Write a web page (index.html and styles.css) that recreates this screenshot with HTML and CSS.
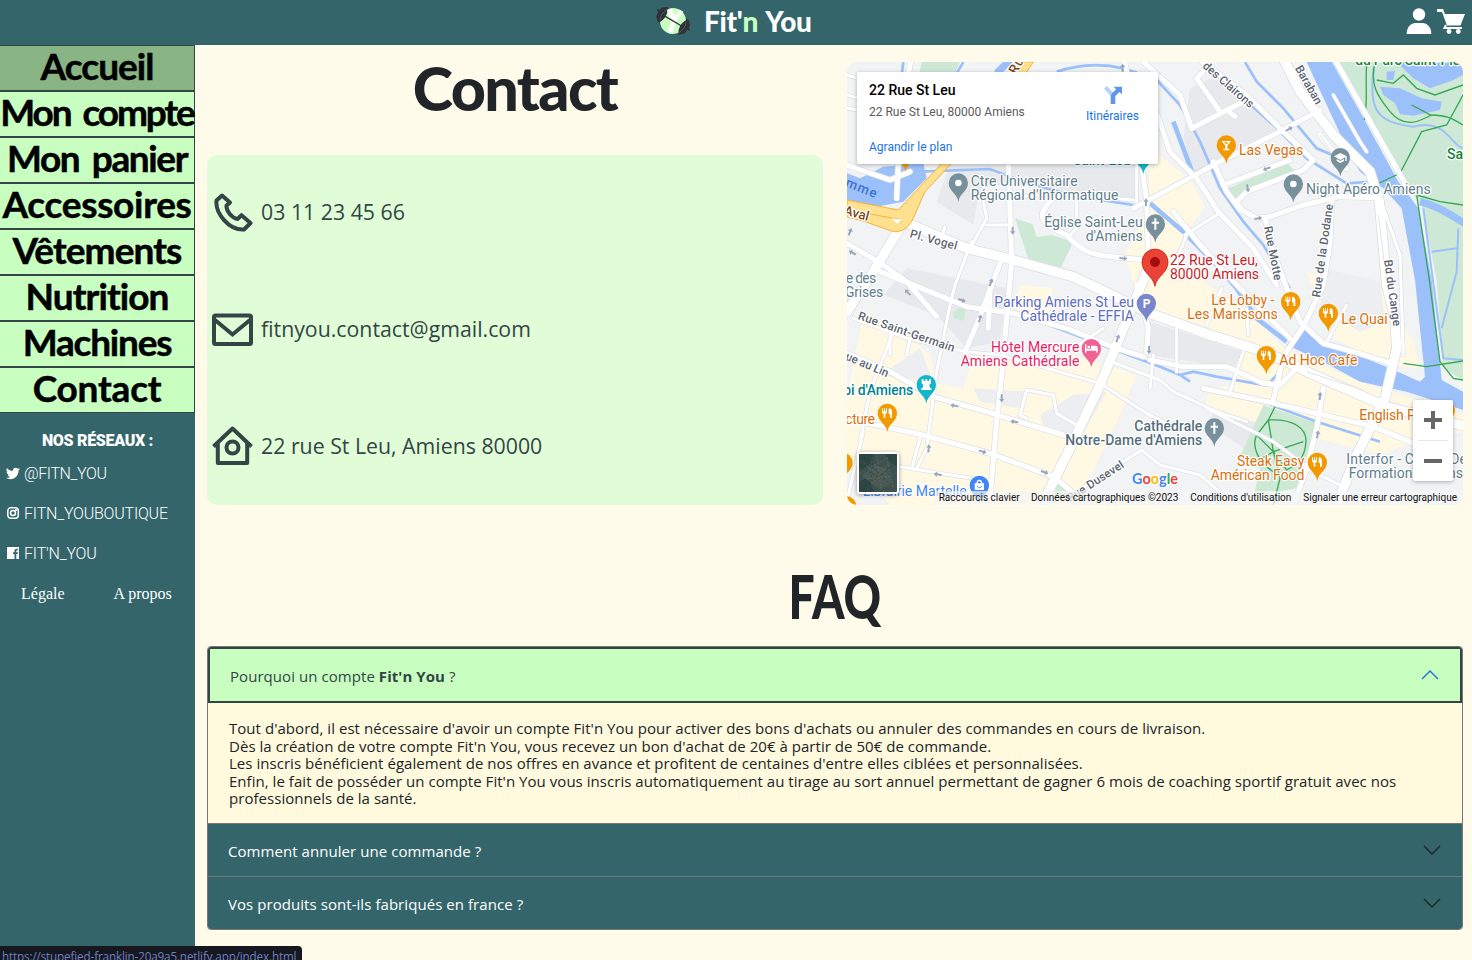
FILE: index.html
```html
<!DOCTYPE html>
<html lang="fr">
<head>
<meta charset="utf-8">
<title>Fit'n You - Contact</title>
<link rel="stylesheet" href="styles.css">
</head>
<body>
<header class="topbar">
  <div class="brand">
    <svg class="brand-logo" viewBox="0 0 102 84" width="34" height="28">
      <g transform="translate(51 42) rotate(31)">
        <path d="M-58-3v-5h7v-8l6-5 6-6h14v52h-14l-6-6-6-5v-13zM58-1v-5h-7v-8l-6-7-6-6H24v52h14l6-6 6-5v-13z" fill="#30343a"/>
        <circle r="39" fill="#c8ffc1"/>
        <path d="M-32-23A40 40 0 0 0-32 23Q-20 0-32-23ZM32-23A40 40 0 0 1 32 23Q20 0 32-23Z" fill="#30343a"/>
      </g>
      <path d="M33 10l14-6 11 24 13-20 11 6-23 32-9 32-14-3 9-30z" fill="#fff"/>
      <path d="M24 26l58 34" stroke="#30343a" stroke-width="4"/>
    </svg>
    <span class="brand-name">Fit'<span class="brand-accent">n</span> You</span>
  </div>
  <div class="tools">
    <svg viewBox="0 0 26 26" width="26" height="26" fill="#fff"><circle cx="13" cy="6.500" r="6.200"/><path d="M.7 26c0-7 4-11 9-11h6.600c5 0 9 4 9 11z"/></svg>
    <svg viewBox="0 0 28 26" width="28" height="26" fill="#fff"><path d="M0 1h6l2 5h20l-4.500 11.500H10L5 4H0z"/><path d="M9 17l-1.500 3H25" fill="none" stroke="#fff" stroke-width="2"/><circle cx="12" cy="23.500" r="2.400"/><circle cx="21.300" cy="23.500" r="2.400"/></svg>
  </div>
</header>

<div class="page">
  <aside class="sidebar">
    <nav class="menu">
      <a class="menu-item active t1">Accueil</a>
      <a class="menu-item t2">Mon compte</a>
      <a class="menu-item t3">Mon panier</a>
      <a class="menu-item t4">Accessoires</a>
      <a class="menu-item t5">Vêtements</a>
      <a class="menu-item t6">Nutrition</a>
      <a class="menu-item t7">Machines</a>
      <a class="menu-item t8">Contact</a>
    </nav>
    <h4 class="social-title">NOS RÉSEAUX :</h4>
    <ul class="social">
      <li><svg viewBox="0 0 16 16" width="14" height="14" fill="#fff"><path d="M5 15c6 0 9.300-5 9.300-9.300V5.200A6.700 6.700 0 0 0 16 3.500a6.600 6.600 0 0 1-1.900.5 3.300 3.300 0 0 0 1.400-1.800 6.500 6.500 0 0 1-2.100.8 3.300 3.300 0 0 0-5.600 3A9.300 9.300 0 0 1 1.100 2.600a3.300 3.300 0 0 0 1 4.400 3.200 3.200 0 0 1-1.500-.4 3.300 3.300 0 0 0 2.600 3.200 3.200 3.200 0 0 1-1.500.1 3.300 3.300 0 0 0 3.100 2.300A6.600 6.600 0 0 1 0 13.500 9.300 9.300 0 0 0 5 15z"/></svg>@FITN_YOU</li>
      <li class="wide"><svg viewBox="0 0 14 14" width="14" height="14" fill="none" stroke="#fff" stroke-width="1.500"><rect x="1.800" y="1.800" width="10.500" height="10.500" rx="3"/><circle cx="7" cy="7" r="2.500"/><circle cx="10" cy="4" r=".4"/></svg>FITN_YOUBOUTIQUE</li>
      <li class="wide"><svg viewBox="0 0 14 14" width="14" height="14"><rect x="1" y="1" width="12" height="12" fill="#fff"/><path d="M8.500 13V8H7V6.300h1.500V5c0-1.500.8-2.300 2.200-2.300h1.200v1.600h-.8c-.6 0-.8.3-.8.900v1.100h1.600L11.700 8h-1.400v5z" fill="#34656b"/></svg>FIT'N_YOU</li>
    </ul>
    <div class="legal"><a>Légale</a><a>A propos</a></div>
  </aside>

  <main class="content">
    <section class="contact-row">
      <div class="contact-col">
        <h1 class="contact-title">Contact</h1>
        <div class="contact-card">
          <p><svg viewBox="0 0 42 42" width="42" height="42" fill="none" stroke="#344545" stroke-width="4"><path d="M11 4.500L5.500 9.500C4 22 18 39.500 33 38.500L39.500 32 30.500 24.200 26.500 28C21 27 15 20 15.500 14.500L19 11.500Z" stroke-linejoin="round"/></svg>03 11 23 45 66</p>
          <p><svg viewBox="0 0 42 42" width="42" height="42" fill="none" stroke="#344545" stroke-width="4"><rect x="3" y="7.500" width="37" height="28.500" rx="1.500"/><path d="M4 12l17.500 14.500L39 12"/></svg>fitnyou.contact@gmail.com</p>
          <p><svg viewBox="0 0 42 42" width="42" height="42" fill="none" stroke="#344545" stroke-width="4"><path d="M2.500 22.500L21.500 4.500l19 18M6.800 18.500V39h29.400V18.500" stroke-linejoin="round"/><circle cx="21.500" cy="23.500" r="6"/></svg>22 rue St Leu, Amiens 80000</p>
        </div>
      </div>

      <div class="map">
        <svg class="map-canvas" viewBox="21 21 1848 1329" width="616" height="443">
          <defs>
            <path id="pin" d="M0 56C-4 30-29 25-29 0A29 29 0 1 1 29 0C29 25 4 30 0 56Z"/>
            <g id="fork" fill="#fff"><path d="M-16-15h3v9h3v-9h3v9h3v-9h3v13l-5 4v11h-5V2l-5-4zM6-15c5 0 8 4 8 10v18H8V2H4v-14z"/></g>
            <path id="cross" d="M-3-17h6v10h8v6H3v18h-6V-1h-8v-6h8z" fill="#fff"/>
            <path id="arrow" d="M0-12L8-2H3V12h-6V-2h-5z" fill="#9aa6bd"/>
            <g id="roads-wide">
              <path d="M180 495L380 580 520 615 700 665 930 775 1110 840 1240 880 1330 915 1400 950 1560 1020 1640 1055 1869 1112"/>
              <path d="M185 510L100 650 21 770"/>
              <path d="M1325 0L1380 110 1480 240 1590 350 1618 440 1640 690 1665 790 1670 880 1635 1030 1550 1200 1490 1350"/>
              <path d="M925 640L780 990 690 1180 605 1350"/>
            </g>
            <g id="roads-mid">
              <path d="M21 895L150 950 280 1025 440 1070 620 1125 720 1155"/>
              <path d="M1477 0L1695 385"/>
              <path d="M1060 0L1220 120 1330 230 1420 315 1390 345 1220 410 1190 440 1205 465 1250 490 1290 485 1390 450 1500 425 1620 428"/>
              <path d="M880 460L1130 325 1330 225 1440 165"/>
              <path d="M910 21L1020 120 1055 220 1210 140M1140 170L1070 70 1100 40M1160 165L1185 185"/>
              <path d="M945 160L990 290 1070 370 1135 470 1240 580 1310 690"/>
              <path d="M1120 320L1160 410 1200 465M1150 390L1350 315"/>
              <path d="M1275 490L1300 590 1340 700 1380 800 1450 865 1540 890 1655 925"/>
              <path d="M1475 435L1470 560 1450 690 1390 815 1330 905 1300 1035"/>
              <path d="M505 330L515 620 500 790 485 960 470 1100 450 1330"/>
              <path d="M480 625L420 785 375 890"/>
              <path d="M120 650L380 755 520 775 680 820 830 880 910 905"/>
              <path d="M60 1100L250 1140 450 1195 640 1265 720 1330"/>
              <path d="M640 430C590 480 590 500 680 540C740 610 780 600 910 615"/>
              <path d="M215 0L180 210 170 430M21 330L150 375 210 350"/>
              <path d="M21 565L130 630 200 680 290 785"/>
              <path d="M930 915L1030 935 1160 935 1270 985 1320 990 1360 950M1090 1000L1280 1040 1450 1080 1600 1115 1720 1165"/>
              <path d="M1450 1000L1430 1120 1400 1240 1360 1350"/>
              <path d="M1440 240L1520 340M450 700L445 820"/>
              <path d="M850 0L860 50M905 330L920 440 925 600"/>
              <path d="M1000 470L1080 570 1200 700 1350 850"/>
              <path d="M890 690L925 820 920 890"/>
            </g>
            <g id="roads-small">
              <path d="M395 560L345 690 330 750 290 950 260 1180 230 1240"/>
              <path d="M430 440L440 490 385 590M440 510H510M505 430L640 415 880 435M890 300V440"/>
              <path d="M40 790L200 850 380 890 480 900 640 945 780 985 920 1075 1010 1120"/>
              <path d="M800 915L960 975 1000 1010 1130 1070 1220 1100M1100 1060L1300 1160 1420 1250"/>
              <path d="M180 1235L300 1255 430 1275M70 1130L20 1340M160 830L90 1010 60 1160"/>
              <path d="M560 1090L540 1080 560 1005 640 1020 650 1075 710 1110"/>
              <path d="M680 1330L905 1185 960 1230 1080 1260 1150 1320"/>
              <path d="M1145 700L1100 810M1010 800V950M1220 760L1225 840M1210 890L1170 1010"/>
              <path d="M1035 540L1130 480M1040 540L1000 640M1520 750L1460 860M1620 430L1680 600 1690 900"/>
              <path d="M710 440V520L690 540M315 515L305 550M150 830V900M210 850L200 900M215 1240L240 1150"/>
              <path d="M21 60L150 100M21 120L60 130M21 160L60 165M1480 120L1560 260 1580 290"/>
              <path d="M790 820L700 880M940 900L930 1000M1400 1240L1520 1300"/>
            </g>
          </defs>
          <rect x="21" y="21" width="1848" height="1329" fill="#f1f3f4"/>
          <path fill="#e7e9ed" d="M330 330H890V430L640 420 540 380 420 400 400 510 290 440ZM1050 100L1130 60 1310 230 1060 350 1030 250ZM200 640L500 700 480 860 380 880 290 780 130 720ZM930 800L1210 890 1180 940 930 900ZM1150 1040L1270 1080 1210 1180 1100 1100ZM480 1060H640V1100L500 1100Z"/>
          <path fill="#fff8e3" d="M75 770L200 840 270 900 290 985 370 1000 400 900 560 920 700 900 890 960 840 1080 710 1350H150L21 1200V1020L60 830ZM855 600L930 440 925 330 960 300 1060 385 1095 455 1040 530 990 630 1120 700 1250 790 1330 880 1560 980 1869 1080V1130L1700 1170 1620 1200 1090 1060 1110 1000 1180 990 1210 890 910 780ZM1400 650L1620 700 1720 860 1740 940 1640 930 1480 850ZM950 640L1100 670 1080 810 930 750ZM540 690L640 700 620 800 520 760Z"/>
          <path fill="#eceef1" d="M400 1000L560 1010 540 1060 420 1040ZM600 1080L700 1020 800 1010 720 1150 610 1110ZM120 960L240 880 280 980ZM1450 640L1620 680 1635 800 1560 830 1440 760Z"/>
          <path fill="#cde9d6" d="M1475 21H1869V975L1810 940 1790 675 1745 450 1680 370ZM525 490L578 508 590 545 635 540 700 560 650 665 600 655 565 612ZM1165 400L1340 325 1370 350 1185 430ZM1270 1050L1430 1105 1410 1240 1370 1300 1240 1325 1260 1240 1200 1205ZM245 21H360L345 55H238ZM340 770L378 750 372 798 342 790ZM655 1275L720 1330H640ZM21 730L40 740 21 780Z"/>
          <g fill="#9cc0f9">
            <path d="M1385 820L1450 865 1550 900 1650 940 1740 980 1755 965 1725 675 1685 460 1630 400 1560 350 1530 300 1400 21H1475L1560 170 1675 380 1735 460 1775 675 1805 975 1869 1010V1065L1700 1010 1560 980 1450 920 1340 870Z"/>
            <path d="M21 355L60 370 130 335 250 325 260 370 190 440 100 457 21 435Z"/>
            <path d="M1620 95L1680 100 1745 130 1805 140 1800 165 1720 182 1680 178 1665 145 1630 120ZM1670 21H1869V60L1840 75 1770 100 1720 70ZM1640 50L1665 48 1660 75 1640 75Z"/>
          </g>
          <g fill="none" stroke="#9cc0f9" stroke-width="8">
            <path d="M240 350L450 342 550 380 700 422 880 450M650 50C740 20 830 20 930 70M190 21L180 100M370 21L350 55"/>
            <path d="M470 55L510 15" stroke-width="22"/>
            <path d="M1215 21L1250 80 1330 160 1380 220 1430 280 1500 310M1060 0L1200 120 1310 220 1400 310 1520 385 1600 380M950 75L1020 150 1080 260 1140 400 1210 500 1270 570 1350 700M1060 355L1310 230"/>
            <path d="M1000 200L1060 360M930 445L1030 530 1130 630 1190 700 1250 790 1340 860" stroke-width="14"/>
            <path d="M240 695L400 765M600 800L960 935 1020 960 1050 980M1020 960L1060 950 1130 965 1280 992 1320 950 1340 910M1090 1003L1280 1045 1430 1100 1620 1160"/>
            <path d="M1600 40C1590 160 1600 200 1720 215 1820 190 1830 270 1869 280M1740 440C1800 460 1820 470 1869 510M1750 460L1810 910 1869 915M1775 590L1850 580M1855 520L1850 650 1805 820" stroke-width="6"/>
            <path d="M1740 440C1800 455 1830 480 1875 505" stroke-width="22"/>
          </g>
          <g fill="none" stroke="#34a853" stroke-width="4">
            <path d="M1580 21C1575 100 1585 150 1572 195M1605 21C1590 90 1610 120 1650 170 1700 230 1750 190 1775 180 1830 180 1850 200 1869 210M1610 75L1660 85 1690 60 1730 100 1785 120 1869 90M1715 150L1775 182M1869 120L1820 210 1745 230 1680 355 1605 390M1730 420L1800 440 1869 450M1730 420L1768 675 1800 920 1840 970 1869 975M1690 925L1760 935 1869 918"/>
            <path d="M1310 1045L1285 1095 1300 1190 1390 1160M1285 1095C1360 1090 1400 1120 1398 1160 1395 1210 1370 1230 1340 1245L1300 1190 1250 1140 1285 1095M1250 1140C1235 1170 1250 1220 1300 1250M1300 1350L1320 1270 1300 1190M1250 1220L1300 1190"/>
          </g>
          <g fill="none" stroke="#dcdfe5" stroke-linejoin="round" stroke-linecap="round">
            <use href="#roads-small" stroke-width="13"/><use href="#roads-mid" stroke-width="19"/><use href="#roads-wide" stroke-width="33"/>
          </g>
          <g fill="none" stroke="#fff" stroke-linejoin="round" stroke-linecap="round">
            <use href="#roads-small" stroke-width="9"/><use href="#roads-mid" stroke-width="15"/><use href="#roads-wide" stroke-width="28"/>
          </g>
          <path d="M1440 240L1500 330M1615 480L1640 680 1665 800M1400 950L1570 1005" fill="none" stroke="#dfe2e6" stroke-width="3"/>
          <path d="M21 435L175 465 310 320 500 90 540 21H580L520 110 335 325 255 410 215 500Q190 535 160 530L75 500 21 485Z" fill="#fee08f" stroke="#f6b23b" stroke-width="3"/>
          <path d="M85 476L155 489 188 495 180 505" stroke="#f6b23b" stroke-width="3" fill="none"/>
          <path d="M155 490L190 494 172 506Z" fill="#fff"/>
          <g>
            <use href="#arrow" x="848" y="38"/><use href="#arrow" x="918" y="442"/><use href="#arrow" transform="translate(518 527) rotate(180)"/>
            <use href="#arrow" transform="translate(850 610) rotate(95)"/><use href="#arrow" transform="translate(453 682) rotate(20)"/><use href="#arrow" transform="translate(420 790) rotate(15)"/>
            <use href="#arrow" transform="translate(1347 222) rotate(60)"/><use href="#arrow" transform="translate(1280 341) rotate(-110)"/><use href="#arrow" transform="translate(1223 400) rotate(170)"/>
            <use href="#arrow" transform="translate(1255 490) rotate(80)"/><use href="#arrow" transform="translate(833 850) rotate(20)"/><use href="#arrow" transform="translate(485 1030) rotate(180)"/>
            <use href="#arrow" transform="translate(343 1052) rotate(-80)"/><use href="#arrow" transform="translate(523 1100) rotate(-80)"/><use href="#arrow" transform="translate(428 1190) rotate(105)"/>
            <use href="#arrow" transform="translate(266 1180) rotate(5)"/><use href="#arrow" transform="translate(293 1258) rotate(-82)"/><use href="#arrow" transform="translate(614 1252) rotate(110)"/>
            <use href="#arrow" transform="translate(927 885) rotate(180)"/><use href="#arrow" transform="translate(1440 1023) rotate(5)"/><use href="#arrow" transform="translate(1433 1138) rotate(10)"/>
            <use href="#arrow" transform="translate(203 712) rotate(-45)"/><use href="#arrow" transform="translate(366 736) rotate(110)"/><use href="#arrow" transform="translate(30 530) rotate(20)"/><use href="#arrow" transform="translate(37 593) rotate(-60)"/>
          </g>

          <g class="street">
            <text transform="translate(208 547) rotate(15)" textLength="145">Pl. Vogel</text>
            <text class="major" transform="translate(10 478) rotate(15)" textLength="76" fill="#7b4a1c">Aval</text>
            <text class="water" transform="translate(14 393) rotate(22)" textLength="98" fill="#3f73cf">mme</text>
            <text class="major" transform="translate(528 60) rotate(-60)" textLength="50" fill="#7b4a1c">Ru</text>
            <text transform="translate(52 792) rotate(19)" textLength="304">Rue Saint-Germain</text>
            <text transform="translate(14 913) rotate(23)" textLength="137">ue au Lin</text>
            <text transform="translate(690 1342) rotate(-33)" textLength="196">Rue Dusevel</text>
            <text transform="translate(1086 36) rotate(41)" textLength="190">des Clairons</text>
            <text transform="translate(1364 40) rotate(60)" textLength="128">Baraban</text>
            <text transform="translate(1272 516) rotate(79)" textLength="165">Rue Motte</text>
            <text transform="translate(1440 728) rotate(-82)" textLength="282">Rue de la Dodane</text>
            <text transform="translate(1632 616) rotate(82)" textLength="200">Bd du Cange</text>
          </g>

          <g>
            <g transform="translate(355 384)"><use href="#pin" fill="#78909c"/><circle r="10" fill="#fff"/></g>
            <g transform="translate(1159 270)"><use href="#pin" fill="#f29900"/><path d="M-14-12H14L3 2V11H9V16H-9V11H-3V2Z" fill="#fff"/><path d="M-7-8H7L3-4H-3Z" fill="#f29900"/></g>
            <g transform="translate(1501 308)"><use href="#pin" fill="#78909c"/><path d="M-19-4L0-14 19-4V10H15V-1L0 7ZM-11 4L0 10 11 4V10L0 16-11 10Z" fill="#fff"/></g>
            <g transform="translate(1360 387)"><use href="#pin" fill="#78909c"/><circle r="10" fill="#fff"/></g>
            <g transform="translate(946 507)"><use href="#pin" fill="#78909c"/><use href="#cross"/></g>
            <g transform="translate(1123 1119)"><use href="#pin" fill="#78909c"/><use href="#cross"/></g>
            <g transform="translate(919 745)"><use href="#pin" fill="#7986cb"/><text class="pin-letter" x="-11" y="13">P</text></g>
            <g transform="translate(754 881)"><use href="#pin" fill="#f06292"/><path d="M-19-13h4V0H-1V-9H13Q19-9 19-2V12H15V6H-15V12H-19Z" fill="#fff"/><circle cx="-8" cy="-5" r="4" fill="#fff"/></g>
            <g transform="translate(259 989)"><use href="#pin" fill="#12b5cb"/><path d="M-14-16h6v5h5v-5h6v5h5v-5h6v12l-5 4 2 10h4v6H-15V10h4l2-10-5-4z" fill="#fff"/></g>
            <g transform="translate(418 1291)"><use href="#pin" fill="#4285f4"/><path d="M-14-6H14V14H-14Z" fill="#fff"/><path d="M-7-5C-7-18 7-18 7-5" fill="none" stroke="#fff" stroke-width="4"/><path d="M-6 2C-5 9 5 9 6 2" fill="none" stroke="#4285f4" stroke-width="3"/></g>
            <g transform="translate(1352 740)"><use href="#pin" fill="#f29900"/><use href="#fork"/></g>
            <g transform="translate(1465 775)"><use href="#pin" fill="#f29900"/><use href="#fork"/></g>
            <g transform="translate(1279 902)"><use href="#pin" fill="#f29900"/><use href="#fork"/></g>
            <g transform="translate(1432 1222)"><use href="#pin" fill="#f29900"/><use href="#fork"/></g>
            <g transform="translate(142 1075)"><use href="#pin" fill="#f29900"/><use href="#fork"/></g>
            <use href="#pin" x="9" y="1223" fill="#f29900"/><use href="#pin" x="20" y="1353" fill="#f29900"/>
            <use href="#pin" x="1816" y="1065" fill="#f29900"/><use href="#pin" x="197" y="295" fill="#f29900"/><use href="#pin" x="910" y="301" fill="#12b5cb"/>
            <path d="M945 694C938 660 906 655 906 621A39 39 0 1 1 984 621C984 655 952 660 945 694Z" fill="#ea4335" stroke="#b3140f" stroke-width="2"/><circle cx="945" cy="621" r="15" fill="#a50e0e"/>
          </g>

          <g class="place">
            <g fill="#607d8b">
              <text x="392" y="393" textLength="321">Ctre Universitaire</text><text x="392" y="435" textLength="443">Régional d'Informatique</text>
              <text x="613" y="516" textLength="295">Église Saint-Leu</text><text x="737" y="558" textLength="171">d'Amiens</text>
              <text x="17" y="684" textLength="92">e des</text><text x="15" y="727" textLength="115">Grises</text>
              <text x="1398" y="418" textLength="374">Night Apéro Amiens</text>
              <text x="1519" y="1227" textLength="362">Interfor - Centre De</text><text x="1526" y="1269" textLength="343">Formation Amiens</text>
            </g>
            <g fill="#546e7a" class="strong"><text x="883" y="1129" textLength="204">Cathédrale</text><text x="676" y="1170" textLength="411">Notre-Dame d'Amiens</text></g>
            <g fill="#d8700b">
              <text x="1197" y="300" textLength="193">Las Vegas</text>
              <text x="1114" y="751" textLength="189">Le Lobby -</text><text x="1042" y="792" textLength="271">Les Marissons</text>
              <text x="1504" y="807" textLength="139">Le Quai</text><text x="1318" y="930" textLength="234">Ad Hoc Cafe</text>
              <text x="1558" y="1095" textLength="215">English Pub</text>
              <text x="1191" y="1234" textLength="202">Steak Easy</text><text x="1112" y="1276" textLength="281">Américan Food</text>
              <text x="16" y="1107" textLength="89">cture</text>
            </g>
            <g fill="#5c6bc0"><text x="463" y="756" textLength="419">Parking Amiens St Leu</text><text x="541" y="798" textLength="341">Cathédrale - EFFIA</text></g>
            <g fill="#e91e63"><text x="453" y="891" textLength="265">Hôtel Mercure</text><text x="362" y="933" textLength="356">Amiens Cathédrale</text></g>
            <g fill="#c5221f"><text x="990" y="631" textLength="263">22 Rue St Leu,</text><text x="990" y="672" textLength="267">80000 Amiens</text></g>
            <g fill="#00838f" class="strong"><text x="10" y="1020" textLength="210">oi d'Amiens</text><text x="700" y="330" textLength="172">Saint-Leu</text></g>
            <text x="68" y="1323" textLength="312" fill="#4285f4">Librairie Martelle</text>
            <g fill="#188038" class="strong"><text x="1821" y="312">Sain</text><text x="1546" y="31" textLength="314">du Parc Saint-Pie</text></g>
          </g>

          <rect x="285" y="1308" width="1584" height="42" fill="#f5f5f5" opacity=".7"/>
          <text class="google" x="876" y="1287" textLength="138" lengthAdjust="spacingAndGlyphs"><tspan fill="#4285f4">G</tspan><tspan fill="#ea4335">o</tspan><tspan fill="#fbbc04">o</tspan><tspan fill="#4285f4">g</tspan><tspan fill="#34a853">l</tspan><tspan fill="#ea4335">e</tspan></text>
          <g class="credits">
            <text x="296" y="1338" textLength="243">Raccourcis clavier</text><text x="573" y="1338" textLength="442">Données cartographiques ©2023</text>
            <text x="1051" y="1338" textLength="303">Conditions d'utilisation</text><text x="1390" y="1338" textLength="461">Signaler une erreur cartographique</text>
          </g>
        </svg>
        <div class="place-card">
          <div class="place-info">
            <strong>22 Rue St Leu</strong>
            <span>22 Rue St Leu, 80000 Amiens</span>
            <a>Agrandir le plan</a>
          </div>
          <div class="directions">
            <svg viewBox="0 0 54 54" width="18" height="18"><path d="M0 8L8 0 28 20 20 30Z" fill="#b4d1f6"/><path d="M20 54V32Q20 26 25 21L36 10 29 2H54V25L46 18 34 30V54Z" fill="#5e97e8"/></svg>
            <a>Itinéraires</a>
          </div>
        </div>
        <div class="satellite"><svg viewBox="0 0 38 38" width="38" height="38"><rect width="38" height="38" fill="#3f5450"/><path d="M0 0h15L9 12 0 16zM26 0h12v12L30 8zM0 28l9-5 6 15H0z" fill="#2f4643"/><path d="M3 22L15 10 27 15 34 30 20 35 10 27z" fill="#4c5a55"/><path d="M2 7l33 27M0 20L30 3M8 36L31 8M12 12l20 5M8 25l26-3M18 2l4 34M28 4l6 30" stroke="#7b867f" stroke-width=".6" stroke-dasharray="2 1.500" opacity=".6"/><path d="M5 3l28 30M3 14l30 16M6 32L34 12M14 5l-3 30" stroke="#27332f" stroke-width="1" stroke-dasharray="2 2" opacity=".6"/></svg></div>
        <div class="zoom"><span class="plus"></span><hr><span class="minus"></span></div>
      </div>
    </section>

    <section class="faq">
      <h1 class="faq-title"><span>FAQ</span></h1>
      <div class="accordion">
        <div class="question open"><span>Pourquoi un compte <b>Fit'n You</b> ?</span>
          <svg viewBox="0 0 18 18" width="18" height="18" fill="none" stroke="#1b6fd8" stroke-width="1.400"><path d="M1 13L9 5l8 8"/></svg></div>
        <div class="answer">
          <p>Tout d'abord, il est nécessaire d'avoir un compte Fit'n You pour activer des bons d'achats ou annuler des commandes en cours de livraison.</p>
          <p>Dès la création de votre compte Fit'n You, vous recevez un bon d'achat de 20€ à partir de 50€ de commande.</p>
          <p>Les inscris bénéficient également de nos offres en avance et profitent de centaines d'entre elles ciblées et personnalisées.</p>
          <p>Enfin, le fait de posséder un compte Fit'n You vous inscris automatiquement au tirage au sort annuel permettant de gagner 6 mois de coaching sportif gratuit avec nos<br>professionnels de la santé.</p>
        </div>
        <div class="question"><span>Comment annuler une commande ?</span>
          <svg viewBox="0 0 18 18" width="18" height="18" fill="none" stroke="#212529" stroke-width="1.400"><path d="M1 5l8 8 8-8"/></svg></div>
        <div class="question"><span>Vos produits sont-ils fabriqués en france ?</span>
          <svg viewBox="0 0 18 18" width="18" height="18" fill="none" stroke="#212529" stroke-width="1.400"><path d="M1 5l8 8 8-8"/></svg></div>
      </div>
    </section>
  </main>
</div>
<div class="status">https://stupefied-franklin-20a9a5.netlify.app/index.html</div>
</body>
</html>
```

FILE: styles.css
```css
* { box-sizing: border-box; }
body { margin: 0; height: 960px; overflow: hidden; background: #fffbeb; font-family: "Open Sans", sans-serif; color: #212529; }
h1, h4, p, ul { margin: 0; padding: 0; }

.topbar { height: 45px; background: #34656b; display: grid; grid-template-columns: 1fr auto 1fr; align-items: center; }
.brand { grid-column: 2; display: flex; align-items: center; gap: 14px; width: 160px; padding-bottom: 4px; }
.brand-name { font: 900 28px/40px Lato, sans-serif; color: #fff; letter-spacing: -.300px; word-spacing: 2px; white-space: nowrap; }
.brand-accent { color: #c8ffc1; }
.tools { display: flex; justify-content: flex-end; gap: 5px; padding: 0 7px 3px 0; }

.page { display: flex; height: 915px; }
.sidebar { width: 195px; flex: none; background: #34656b; color: #fff; }
.menu-item { display: flex; justify-content: center; height: 46px; border: 1px solid #344545; border-left: 0; background: #c8ffc1; color: #000; font: 700 37px/39px Lato, sans-serif; font-variant-ligatures: none; white-space: nowrap; -webkit-text-stroke: .5px #000; }
.menu-item.active { background: #89b585; }
.t1 { letter-spacing: -1px; }
.t2 { letter-spacing: -2.100px; word-spacing: 5px; }
.t3 { letter-spacing: -1.400px; word-spacing: 5px; }
.t4 { letter-spacing: -.300px; }
.t5 { letter-spacing: -.900px; }
.t6 { letter-spacing: -.900px; }
.t7 { letter-spacing: -1.200px; }
.t8 { letter-spacing: -.200px; }
.social-title { font: 900 16px/20px Roboto, sans-serif; letter-spacing: -.300px; text-align: center; margin-top: 18px; }
.social { list-style: none; margin-top: 2px; }
.social li { height: 40px; display: flex; align-items: center; gap: 4px; padding-left: 6px; font: 300 16px Roboto, sans-serif; letter-spacing: -.400px; }
.social li.wide { letter-spacing: -.200px; }
.legal { display: flex; gap: 49px; padding: 11px 0 0 21px; font: 16px/20px "Liberation Serif", serif; }

.content { flex: 1; padding: 17px 9px 0 12px; }
.contact-row { display: flex; gap: 24px; height: 443px; }
.contact-col { width: 616px; }
.contact-title { height: 93px; font: 900 61px/51px Lato, sans-serif; text-align: center; letter-spacing: -1.600px; }
.contact-card { height: 350px; border-radius: 10px; background: #e1fdd8; display: flex; flex-direction: column; justify-content: space-around; }
.contact-card p { height: 117px; display: flex; align-items: center; gap: 8px; padding: 0 0 3px 4px; font-size: 21.300px; color: #344545; }

.map { position: relative; width: 616px; height: 443px; border-radius: 10px; overflow: hidden; font-family: Roboto, sans-serif; }
.map-canvas { display: block; }
.place, .street { font-family: Roboto, sans-serif; font-size: 42px; paint-order: stroke; stroke: #fff; stroke-width: 7px; stroke-linejoin: round; }
.street { font-size: 35px; font-weight: 500; fill: #5b6470; }
.major { font-size: 40px; }
.water { font-size: 40px; stroke: none; }
.strong { font-weight: 500; }
.pin-letter { font: 700 36px Roboto, sans-serif; fill: #fff; }
.google { font: 700 46px Lato, sans-serif; paint-order: stroke; stroke: #fff; stroke-width: 5px; }
.credits { font: 30px Roboto, sans-serif; fill: #111; }
.place-card { position: absolute; left: 10px; top: 10px; width: 301px; height: 92px; padding: 10px 19px 0 12px; background: #fff; border-radius: 2px; box-shadow: 0 1px 4px rgba(0,0,0,.3); display: flex; justify-content: space-between; font-size: 12px; }
.place-info { display: flex; flex-direction: column; color: #5b5b5b; }
.place-info strong { font-size: 14px; line-height: 16px; font-weight: 500; color: #000; }
.place-info span { line-height: 16px; margin-top: 6px; }
.place-info a { line-height: 16px; margin-top: 19px; color: #1a73e8; }
.directions { display: flex; flex-direction: column; align-items: center; padding-top: 4px; color: #1a73e8; }
.directions a { line-height: 16px; margin-top: 4px; }
.satellite { position: absolute; left: 10px; top: 390px; width: 42px; height: 42px; border: 2px solid #fff; border-radius: 3px; overflow: hidden; box-shadow: 0 1px 4px rgba(0,0,0,.4); }
.zoom { position: absolute; left: 566px; top: 338px; width: 40px; height: 81px; background: #fff; border-radius: 2px; box-shadow: 0 1px 4px rgba(0,0,0,.3); display: flex; flex-direction: column; align-items: center; padding-top: 11px; }
.zoom hr { width: 30px; height: 1px; border: 0; margin: 11px 0 18px; background: #e6e6e6; }
.plus { width: 18px; height: 18px; background: linear-gradient(#666, #666) center / 18px 4px no-repeat, linear-gradient(#666, #666) center / 4px 18px no-repeat; }
.minus { width: 18px; height: 4px; background: #666; }

.faq-title { height: 141px; padding-top: 64px; font: 900 61px/54px Lato, sans-serif; text-align: center; }
.faq-title span { display: inline-block; transform: scaleX(.76); }
.accordion { border: 1px solid #777; border-radius: 4px; overflow: hidden; font-size: 15px; }
.question { height: 53px; padding: 0 21px 0 20px; background: #34656b; color: #fff; display: flex; align-items: center; justify-content: space-between; border-top: 1px solid #777; letter-spacing: .060px; }
.question span { padding-top: 2px; }
.question.open { height: 56px; background: #c8ffc1; color: #344545; border: 2px solid #344545; }
.answer { height: 120px; padding: 17px 0 0 21px; background: #fff9de; line-height: 17.600px; white-space: nowrap; letter-spacing: .040px; }

.status { position: absolute; left: 0; bottom: 0; width: 302px; height: 14px; padding-left: 2px; overflow: hidden; background: #16181f; border-radius: 0 4px 0 0; color: #6f7fc0; font-size: 11.700px; line-height: 21px; letter-spacing: -.150px; white-space: nowrap; }
```
